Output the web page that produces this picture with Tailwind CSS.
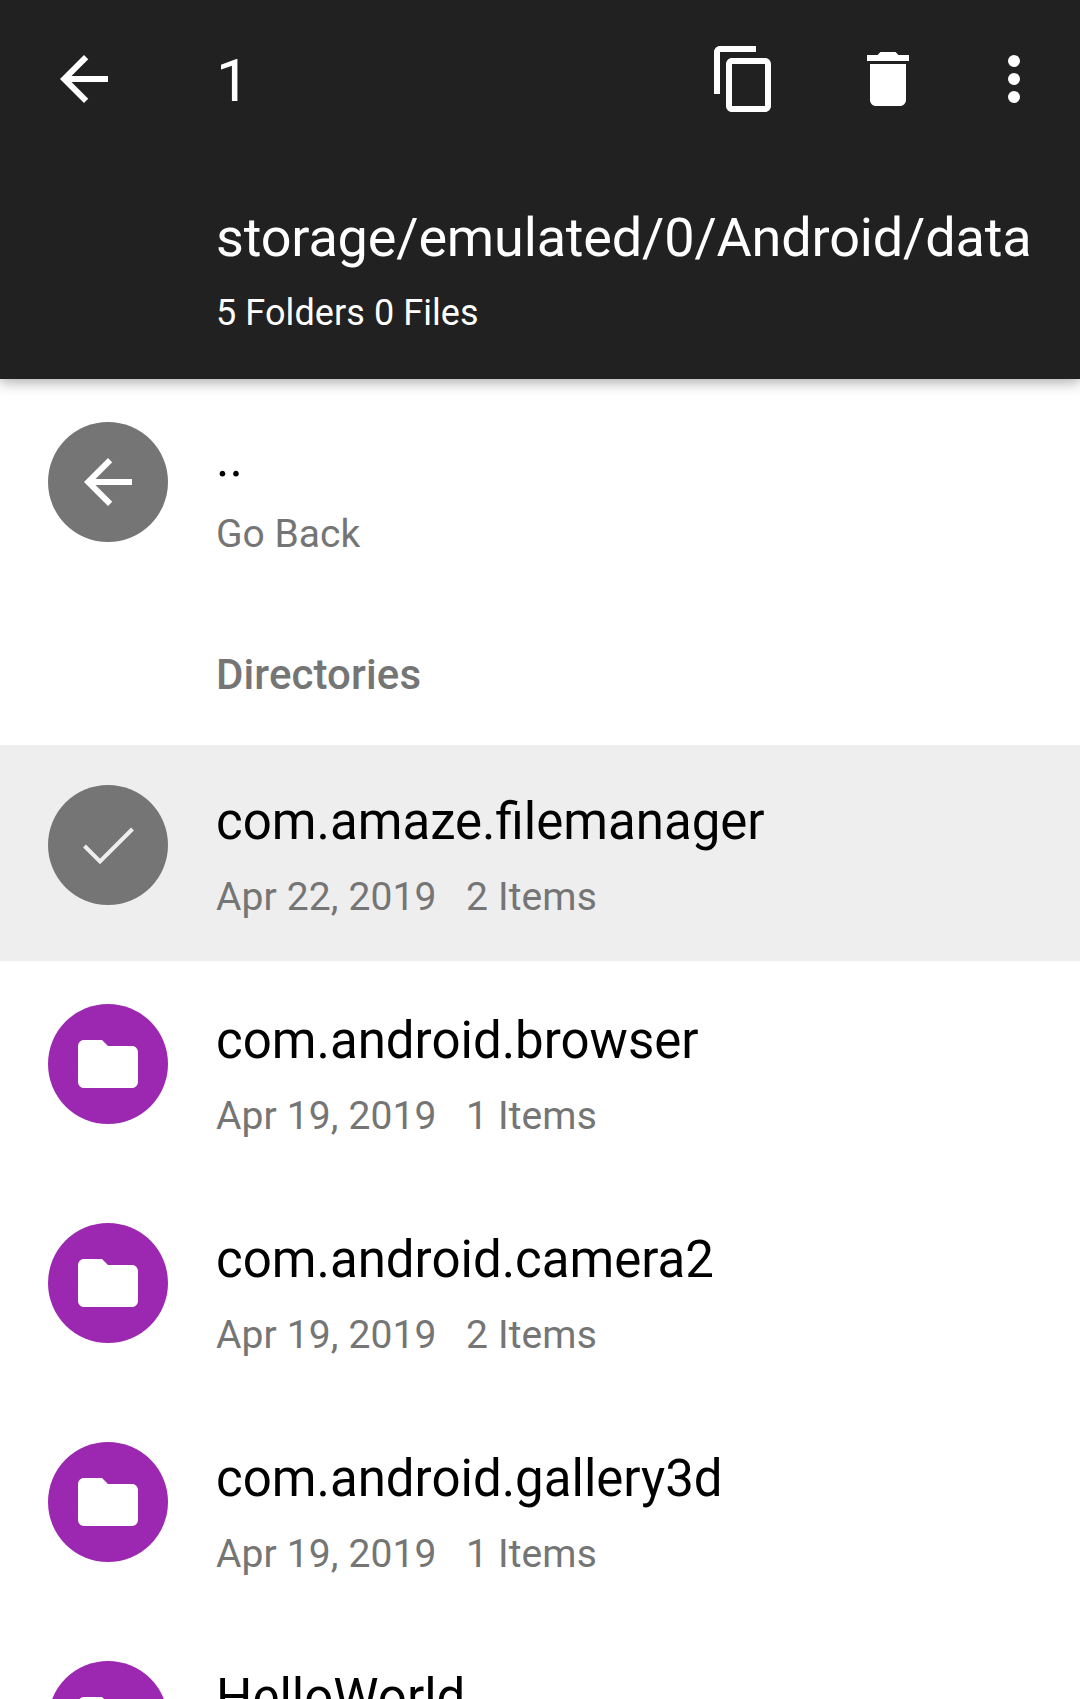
<!DOCTYPE html>
<html lang="en"><head><meta charset="utf-8"><title>Files</title>
<script src="https://cdn.jsdelivr.net/npm/@tailwindcss/browser@4"></script></head>
<body class="bg-white font-['Roboto',sans-serif] h-[1699px] overflow-hidden text-black">
<header class="relative z-10 h-[379px] bg-[#212121] text-white shadow-[0_4px_12px_rgba(0,0,0,0.3)]">
<div class="flex h-[158px] items-center">
<svg class="ml-[48px] size-[72px] shrink-0" viewBox="0 0 24 24" fill="currentColor"><path d="M20 11H7.83l5.59-5.59L12 4l-8 8 8 8 1.41-1.41L7.83 13H20v-2z"/></svg>
<span class="ml-[96px] pt-[4px] text-[60px] leading-[70px]">1</span>
<svg class="ml-auto mr-[72px] size-[72px]" viewBox="0 0 24 24" fill="currentColor"><path d="M16 1H4c-1.100 0-2 .9-2 2v14h2V3h12V1zm3 4H8c-1.100 0-2 .9-2 2v14c0 1.100.9 2 2 2h11c1.100 0 2-.9 2-2V7c0-1.100-.9-2-2-2zm0 16H8V7h11v14z"/></svg>
<svg class="mr-[54px] size-[72px]" viewBox="0 0 24 24" fill="currentColor"><path d="M6 19c0 1.100.9 2 2 2h8c1.100 0 2-.9 2-2V7H6v12zM19 4h-3.500l-1-1h-5l-1 1H5v2h14V4z"/></svg>
<svg class="mr-[30px] size-[72px]" viewBox="0 0 24 24" fill="currentColor"><circle cx="12" cy="6" r="2"/><circle cx="12" cy="12" r="2"/><circle cx="12" cy="18" r="2"/></svg>
</div>
<div class="pl-[216px] pt-[48px]">
<div class="text-[54px] leading-[64px] tracking-[-0.16px] whitespace-nowrap">storage/emulated/0/Android/data</div>
<div class="mt-[22px] text-[36px] leading-[42px] tracking-[0.08px]">5 Folders 0 Files</div>
</div>
</header>
<main id="list"></main>
<script>
const folder='<svg class="size-[72px]" viewBox="0 0 24 24" fill="currentColor"><path d="M10 4H4c-1.100 0-1.990.9-1.990 2L2 18c0 1.100.9 2 2 2h16c1.100 0 2-.9 2-2V8c0-1.100-.9-2-2-2h-8l-2-2z"/></svg>';
const back='<svg class="size-[72px]" viewBox="0 0 24 24" fill="currentColor"><path d="M20 11H7.83l5.59-5.59L12 4l-8 8 8 8 1.41-1.41L7.83 13H20v-2z"/></svg>';
const check='<svg class="size-[60px]" viewBox="0 0 60 60" fill="none" stroke="#eee" stroke-width="4"><path d="M6.500 31 L22 46.400 L54.500 14"/></svg>';
const row=(name,sub,icon,bg,extra,track='tracking-[0.13px]')=>`<section class="flex items-start ${extra}"><div class="ml-12 mt-[40px] flex size-[120px] shrink-0 items-center justify-center rounded-full text-white ${bg}">${icon}</div><div class="ml-12 pt-[47px]"><div class="text-[51px] leading-[60px] whitespace-nowrap">${name}</div><div class="mt-[22px] text-[39px] leading-[46px] text-[#757575] whitespace-pre ${track}">${sub}</div></div></section>`;
document.getElementById('list').innerHTML=
row('..','Go Back',back,'bg-[#757575]','h-[219px] pt-[3px]','tracking-normal')+
'<h2 class="h-[147px] pl-[216px] pt-[52px] text-[42px] leading-[50px] font-medium tracking-[0.1px] text-[#757575]">Directories</h2>'+
row('com.amaze.filemanager','Apr 22, 2019   2 Items',check,'bg-[#757575]','h-[216px] bg-[#eee]')+
[['com.android.browser','1'],['com.android.camera2','2'],['com.android.gallery3d','1'],['HelloWorld','1']].map(([n,c])=>row(n,`Apr 19, 2019   ${c} Items`,folder,'bg-[#9c27b0]','h-[219px] pt-[3px]')).join('');
</script>
</body></html>
